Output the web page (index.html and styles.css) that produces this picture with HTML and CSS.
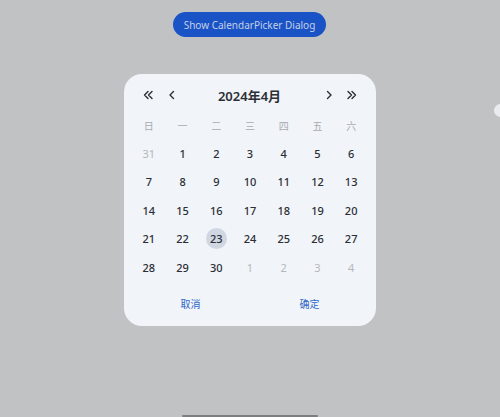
FILE: index.html
```html
<!DOCTYPE html>
<html>
<head>
<meta charset="utf-8">
<link rel="stylesheet" href="styles.css">
</head>
<body>
<div class="page">
  <div class="top">
    <button class="show-btn">Show CalendarPicker Dialog</button>
  </div>
  <div class="dialog">
    <div class="header">
      <span class="nav">
        <svg width="12" height="12" viewBox="0 0 12 12"><path d="M6 2.5 2.5 6 6 9.5M10 2.5 6.5 6 10 9.5" fill="none" stroke="#2b2e35" stroke-width="1.4" stroke-linecap="round" stroke-linejoin="round"/></svg>
      </span>
      <span class="nav">
        <svg width="12" height="12" viewBox="0 0 12 12"><path d="M7.5 2.5 4 6 7.5 9.5" fill="none" stroke="#2b2e35" stroke-width="1.4" stroke-linecap="round" stroke-linejoin="round"/></svg>
      </span>
      <span class="title">2024年4月</span>
      <span class="nav">
        <svg width="12" height="12" viewBox="0 0 12 12"><path d="M4.5 2.5 8 6 4.5 9.5" fill="none" stroke="#2b2e35" stroke-width="1.4" stroke-linecap="round" stroke-linejoin="round"/></svg>
      </span>
      <span class="nav">
        <svg width="12" height="12" viewBox="0 0 12 12"><path d="M2 2.5 5.5 6 2 9.5M6 2.5 9.5 6 6 9.5" fill="none" stroke="#2b2e35" stroke-width="1.4" stroke-linecap="round" stroke-linejoin="round"/></svg>
      </span>
    </div>
    <div class="grid">
      <span class="wd">日</span><span class="wd">一</span><span class="wd">二</span><span class="wd">三</span><span class="wd">四</span><span class="wd">五</span><span class="wd">六</span>
      <span class="d other">31</span><span class="d">1</span><span class="d">2</span><span class="d">3</span><span class="d">4</span><span class="d">5</span><span class="d">6</span>
      <span class="d">7</span><span class="d">8</span><span class="d">9</span><span class="d">10</span><span class="d">11</span><span class="d">12</span><span class="d">13</span>
      <span class="d">14</span><span class="d">15</span><span class="d">16</span><span class="d">17</span><span class="d">18</span><span class="d">19</span><span class="d">20</span>
      <span class="d">21</span><span class="d">22</span><span class="d"><span class="sel">23</span></span><span class="d">24</span><span class="d">25</span><span class="d">26</span><span class="d">27</span>
      <span class="d">28</span><span class="d">29</span><span class="d">30</span><span class="d other">1</span><span class="d other">2</span><span class="d other">3</span><span class="d other">4</span>
    </div>
    <div class="actions">
      <span class="act">取消</span>
      <span class="act">确定</span>
    </div>
  </div>
  <div class="edge-dot"></div>
  <div class="home-bar"></div>
</div>
</body>
</html>
```
FILE: styles.css
```css
* { box-sizing: border-box; }
html, body { margin: 0; padding: 0; }
body {
  width: 500px;
  height: 417px;
  background: #c1c2c4;
  font-family: "Noto Sans", "Noto Sans CJK SC", sans-serif;
  overflow: hidden;
}
.page {
  position: relative;
  width: 500px;
  height: 417px;
  display: flex;
  flex-direction: column;
  align-items: center;
}
.top {
  padding-top: 12px;
  display: flex;
  justify-content: center;
  width: 100%;
}
.show-btn {
  width: 153px;
  height: 25px;
  margin-left: -1px;
  border: none;
  border-radius: 13px;
  background: #1a53c6;
  color: #c3cfe6;
  font-family: "Noto Sans", sans-serif;
  font-size: 10px;
  padding: 0;
}
.dialog {
  margin-top: 37px;
  width: 252px;
  height: 252px;
  border-radius: 18px;
  background: #f1f4f8;
  padding: 10px 8px 0 8px;
  display: flex;
  flex-direction: column;
}
.header {
  height: 22px;
  display: flex;
  align-items: center;
  padding: 0 10px 0 10px;
}
.nav {
  width: 12px;
  height: 12px;
  display: flex;
}
.nav:nth-child(1) { margin-right: 12px; }
.nav:nth-child(4) { margin-right: 11px; }
.title {
  flex: 1;
  text-align: center;
  font-size: 13px;
  font-weight: 600;
  color: #2b2e35;
  padding-right: 2px;
  font-family: "Noto Sans", "Noto Sans CJK SC", sans-serif;
}
.grid {
  display: grid;
  grid-template-columns: repeat(7, 1fr);
  grid-auto-rows: 28.4px;
  margin-top: 5px;
}
.wd, .d {
  display: flex;
  align-items: center;
  justify-content: center;
}
.wd {
  font-size: 10px;
  color: #a8abb0;
  font-family: "Noto Sans CJK SC", sans-serif;
}
.d {
  font-size: 11px;
  font-weight: 500;
  color: #2b2e35;
}
.d.other { color: #b5b7ba; font-weight: 400; }
.sel {
  width: 21px;
  height: 21px;
  border-radius: 50%;
  background: #d0d7e3;
  display: flex;
  align-items: center;
  justify-content: center;
}
.actions {
  display: flex;
  margin-top: 9px;
  height: 26px;
  align-items: center;
}
.act {
  flex: 1;
  text-align: center;
  font-size: 10px;
  color: #2f66c6;
  font-family: "Noto Sans CJK SC", sans-serif;
}
.act:first-child { padding-right: 2px; }
.edge-dot {
  position: absolute;
  left: 494px;
  top: 104px;
  width: 13px;
  height: 13px;
  border-radius: 50%;
  background: #e9ebef;
}
.home-bar {
  position: absolute;
  left: 182px;
  top: 415px;
  width: 136px;
  height: 2px;
  background: #7d7e80;
  border-radius: 1px;
}
```
